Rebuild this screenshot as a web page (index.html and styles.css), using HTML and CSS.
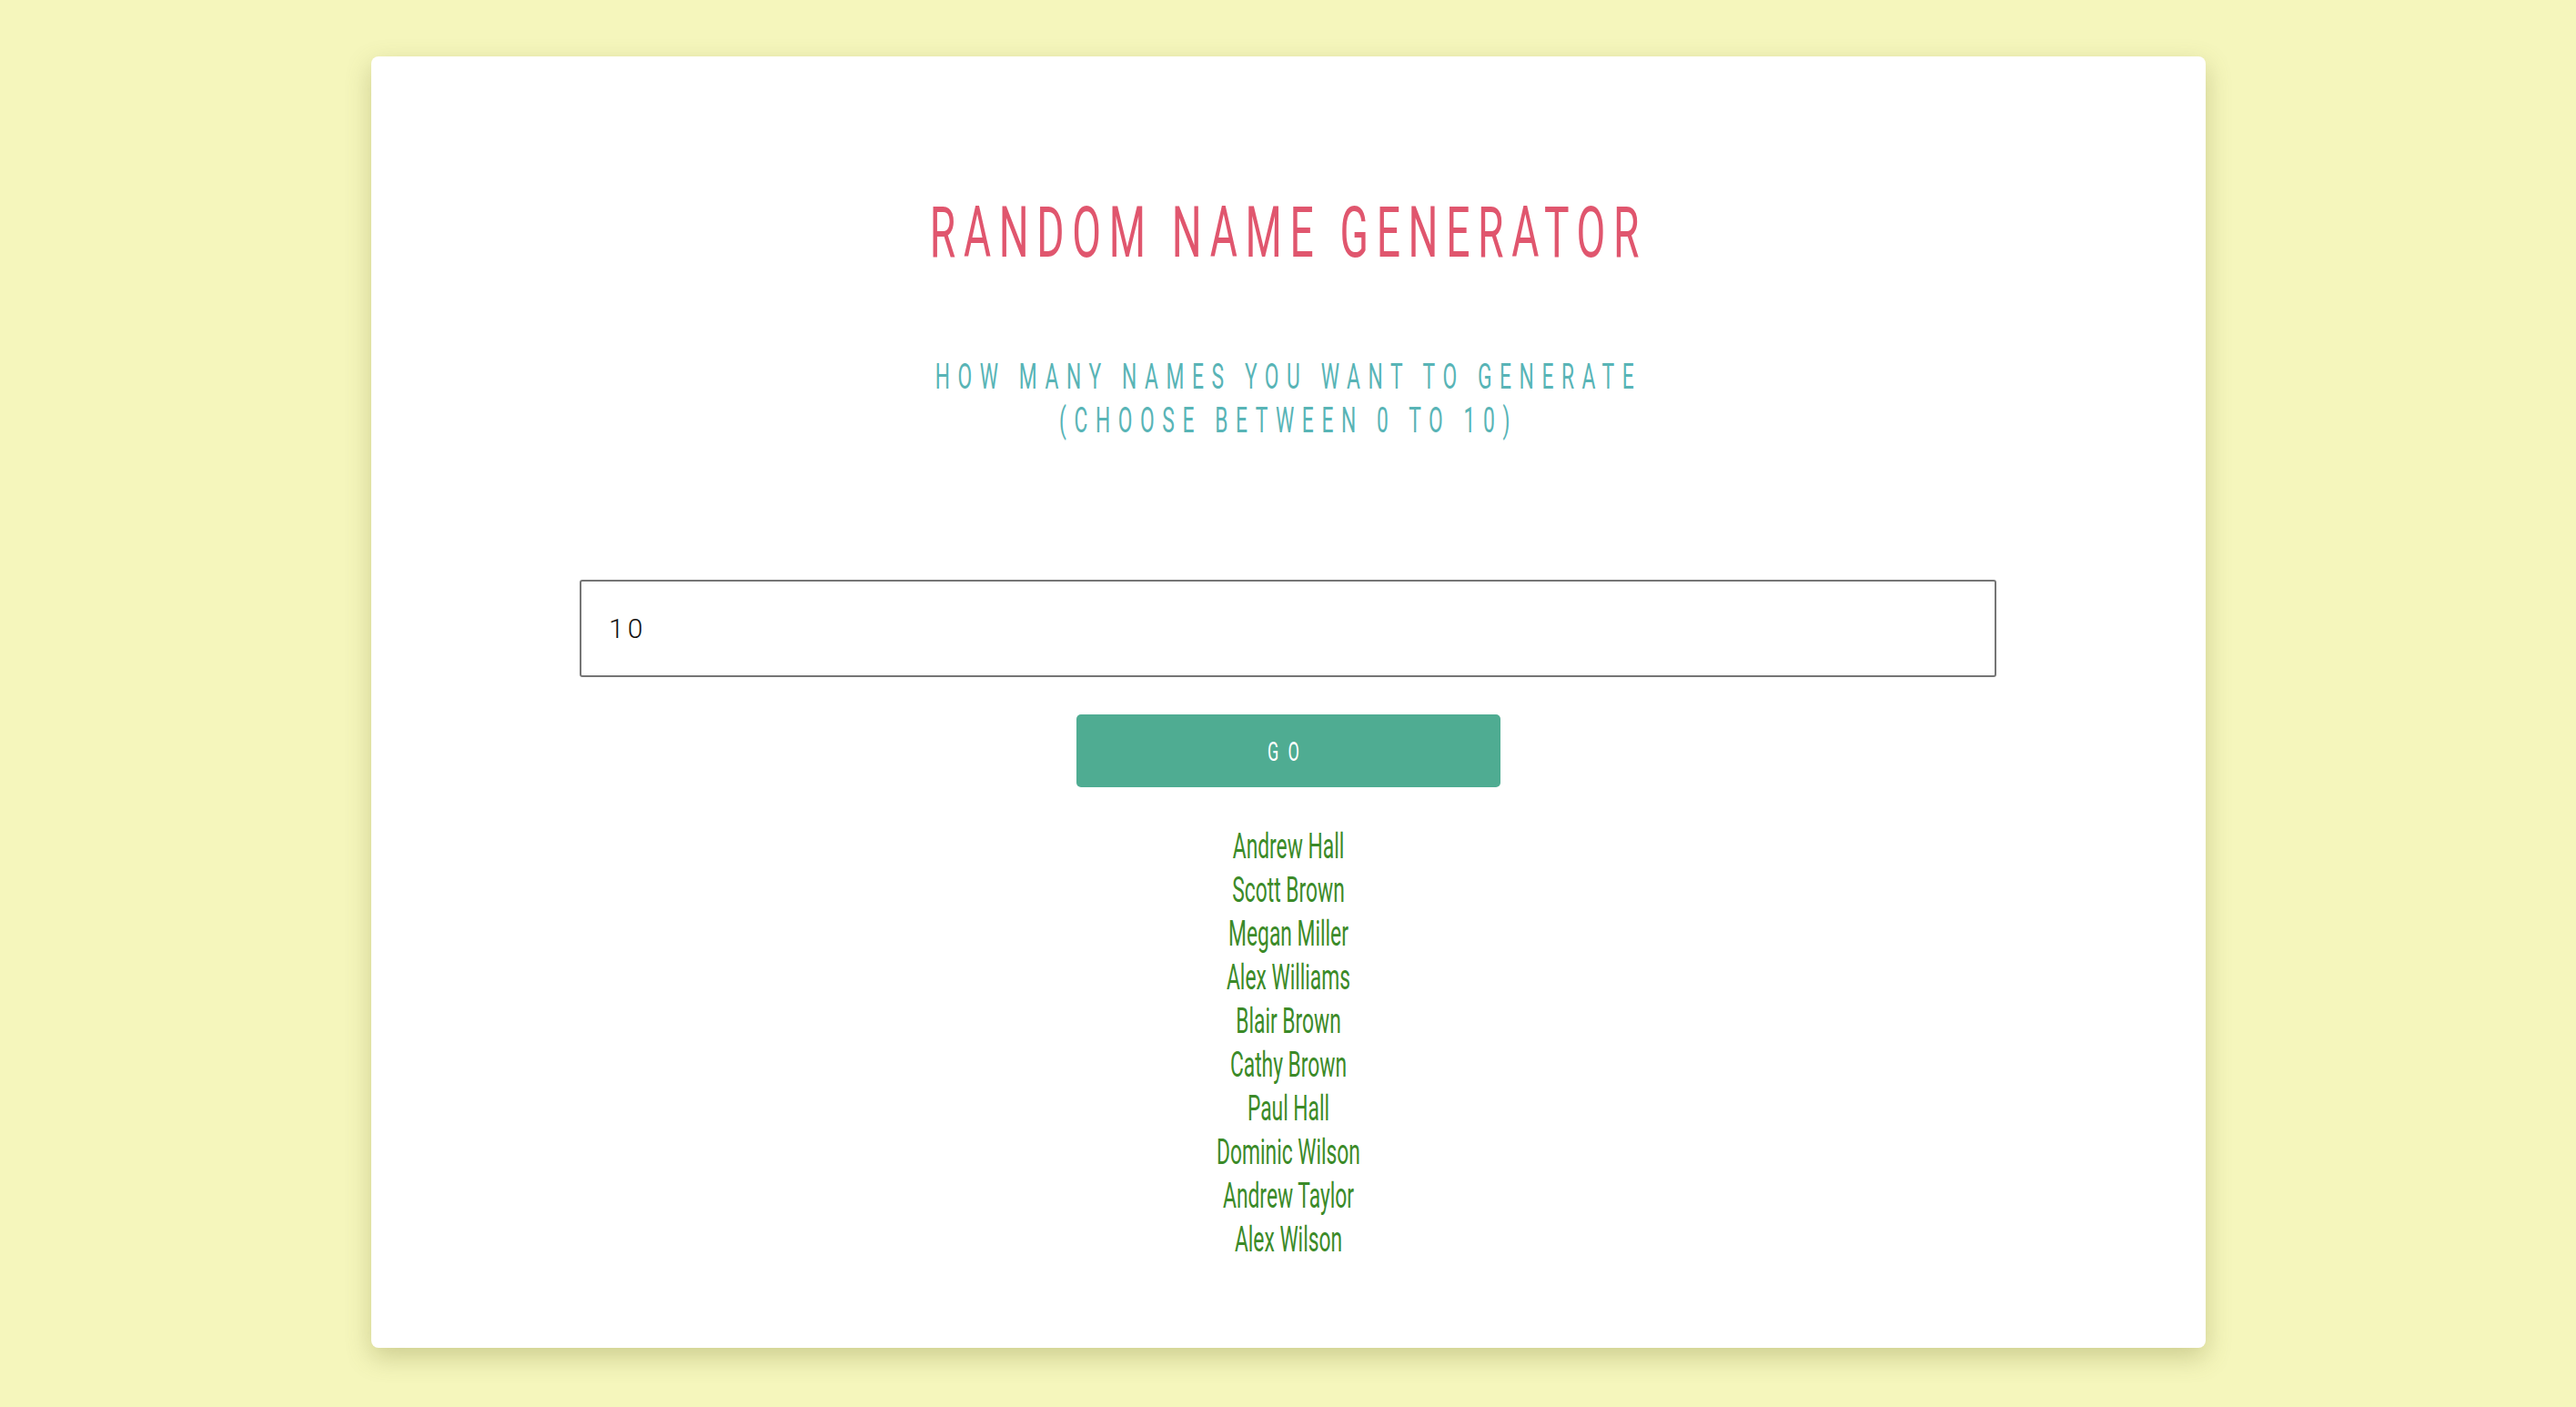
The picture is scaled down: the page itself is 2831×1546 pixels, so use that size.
FILE: index.html
```html
<!DOCTYPE html>
<html lang="en">
<head>
<meta charset="utf-8">
<title>Random Name Generator</title>
<link rel="stylesheet" href="styles.css">
</head>
<body>
  <main class="card">
    <h1 class="title">Random Name Generator</h1>
    <p class="subtitle">How many names you want to generate<br>(choose between 0 to 10)</p>
    <form class="form">
      <input class="count-input" type="text" value="10">
      <button class="go-btn" type="button"><span class="go-label">Go</span></button>
    </form>
    <ul class="names">
      <li>Andrew Hall</li>
      <li>Scott Brown</li>
      <li>Megan Miller</li>
      <li>Alex Williams</li>
      <li>Blair Brown</li>
      <li>Cathy Brown</li>
      <li>Paul Hall</li>
      <li>Dominic Wilson</li>
      <li>Andrew Taylor</li>
      <li>Alex Wilson</li>
    </ul>
  </main>
</body>
</html>
```

FILE: styles.css
```css
html, body {
  margin: 0;
  padding: 0;
}

body {
  background: #f5f6bc;
  font-family: Roboto, "Liberation Sans", sans-serif;
  padding: 62px 0 40px;
}

.card {
  width: 2016px;
  box-sizing: border-box;
  margin: 0 auto;
  background: #ffffff;
  border-radius: 8px;
  box-shadow: 0 10px 28px rgba(110, 110, 40, 0.3);
  padding: 154px 0 95px;
  display: flex;
  flex-direction: column;
  align-items: center;
}

.title {
  margin: 0;
  width: 100%;
  text-align: center;
  font-size: 77px;
  line-height: 80px;
  font-weight: 400;
  text-transform: uppercase;
  letter-spacing: 14.4px;
  color: #e0566e;
  transform: scaleX(0.6);
  transform-origin: center;
}

.subtitle {
  margin: 94px 0 0;
  width: 100%;
  text-align: center;
  font-size: 38px;
  line-height: 48px;
  font-weight: 400;
  text-transform: uppercase;
  letter-spacing: 14.3px;
  color: #58b4b6;
  transform: scaleX(0.6);
  transform-origin: center;
}

.form {
  margin: 151px 0 0;
  display: flex;
  flex-direction: column;
  align-items: center;
  gap: 41px;
}

.count-input {
  width: 1557px;
  height: 107px;
  box-sizing: border-box;
  border: 2px solid #757575;
  border-radius: 3px;
  padding: 0 30px;
  font-family: Roboto, "Liberation Sans", sans-serif;
  font-size: 30px;
  font-weight: 300;
  letter-spacing: 4px;
  color: #111;
  background: #fff;
  outline: none;
}

.go-btn {
  width: 466px;
  height: 80px;
  border: none;
  border-radius: 5px;
  background: #4fac92;
  color: #ffffff;
  font-family: Roboto, "Liberation Sans", sans-serif;
  font-size: 30px;
  font-weight: 400;
  text-transform: uppercase;
  letter-spacing: 17px;
  padding: 0;
  display: flex;
  align-items: center;
  justify-content: center;
  cursor: pointer;
}

.go-label {
  display: inline-block;
  transform: scaleX(0.6);
  transform-origin: center;
}

.names {
  list-style: none;
  margin: 41px 0 0;
  padding: 0;
  width: 100%;
  text-align: center;
  font-size: 38px;
  line-height: 48px;
  font-weight: 400;
  color: #3b8a28;
  transform: scaleX(0.6);
  transform-origin: center;
}
```
